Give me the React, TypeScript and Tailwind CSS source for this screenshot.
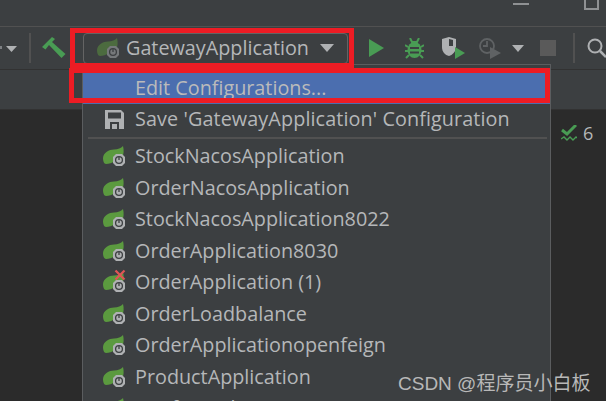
import React from "react";

const font = { fontFamily: '"Open Sans", "Noto Sans", sans-serif' };

function Spring({ dim = false, failed = false }: { dim?: boolean; failed?: boolean }) {
  return (
    <svg width="22" height="20" viewBox="0 0 22 20" className="shrink-0 overflow-visible">
      <path d="M0 12 C0.500 6.500 6 3.500 11 3.500 C15 3.500 18 2 20 0 C21 4 21 8 19 12 L12 15 C9 17 6 18 3 18 C1 18 0 15 0 12 Z" fill={dim ? "#4c6b3f" : "#5b9a3f"} />
      <path d="M10 11 L13 8 H19 L22 11 V17 L19 20 H13 L10 17 Z" fill={dim ? "#76797b" : "#afb1b3"} />
      <circle cx="16" cy="14" r="3.400" fill="none" stroke="#3c3f41" strokeWidth="1.300" />
      <path d="M16 11 V14" stroke="#3c3f41" strokeWidth="1.300" />
      {failed && <path d="M12.500 -1.500 L21.500 7.500 M21.500 -1.500 L12.500 7.500" stroke="#e05555" strokeWidth="2.200" />}
    </svg>
  );
}

function Item({ label, failed }: { label: string; failed?: boolean }) {
  return (
    <div className="flex h-[31.500px] items-center">
      <div className="ml-[20px] w-[32px] shrink-0"><Spring failed={failed} /></div>
      <span className="text-[19.800px] whitespace-nowrap text-[#b5b7b9]">{label}</span>
    </div>
  );
}

export default function App() {
  const items = [
    "StockNacosApplication",
    "OrderNacosApplication",
    "StockNacosApplication8022",
    "OrderApplication8030",
    "OrderApplication (1)",
    "OrderLoadbalance",
    "OrderApplicationopenfeign",
    "ProductApplication",
    "ConfigApplication",
  ];
  return (
    <div className="relative h-[401px] w-[606px] overflow-hidden bg-[#3c3f41]" style={font}>
      {/* title strip */}
      <div className="flex h-[27px] items-start justify-end border-b border-[#515151] pr-[7px]">
        <div className="mr-[55px] mt-[3px] h-[2px] w-[16px] bg-[#8f9193]" />
        <div className="h-[10px] w-[15px] border-2 border-t-0 border-[#8f9193]" />
      </div>

      {/* toolbar */}
      <div className="flex h-[43px] items-center border-b border-[#323232]">
        <svg width="17" height="8" viewBox="0 0 17 8" className="mt-[1px] shrink-0">
          <path d="M0 1 H2 V4 H0 Z" fill="#7d8083" />
          <path d="M6 1 H17 L11.500 7 Z" fill="#afb1b3" />
        </svg>
        <div className="ml-[12px] h-[30px] w-[2px] shrink-0 bg-[#515151]" />
        <svg width="24" height="22" viewBox="0 0 24 22" className="ml-[11px] shrink-0">
          <path d="M0 10 L10 0 L13 2 L10 5 L23.500 17 L19.500 21 L7 8 L3.500 12.500 Z" fill="#499c54" />
        </svg>
        <div className="ml-[17px] flex h-[31px] w-[265px] shrink-0 items-center rounded-[4px] border border-[#646464]">
          <div className="ml-[13px] w-[29px] shrink-0"><Spring dim /></div>
          <span className="text-[19.800px] whitespace-nowrap text-[#b5b7b9]">GatewayApplication</span>
          <svg width="14" height="8" viewBox="0 0 14 8" className="ml-[11px] shrink-0"><path d="M0 0 H14 L7 8 Z" fill="#afb1b3" /></svg>
        </div>
        <svg width="15" height="18" viewBox="0 0 15 18" className="ml-[21px] shrink-0"><path d="M0 0 L15 9 L0 18 Z" fill="#499c54" /></svg>
        <svg width="19" height="21" viewBox="0 0 19 21" className="ml-[21px] shrink-0">
          <path d="M5 0 L7 4 H12 L14 0 M0 7 L3 9 M19 7 L16 9 M0 13 H19 M1 20 L4 17 M18 20 L15 17" stroke="#499c54" strokeWidth="2" fill="none" />
          <ellipse cx="9.500" cy="12" rx="7" ry="8" fill="#499c54" />
          <path d="M5 10 H14 M5 14.500 H14" stroke="#3c3f41" strokeWidth="1.800" />
        </svg>
        <svg width="24" height="22" viewBox="0 0 24 22" className="ml-[18px] shrink-0">
          <path d="M0 2 L7 0 L14 2 V10 C14 15 10 18 7 19 C3 18 0 15 0 10 Z" fill="#afb1b3" />
          <path d="M7 2 L11 3 V9 H7 Z" fill="#3c3f41" />
          <path d="M13 10 L23 16 L13 22 Z" fill="#499c54" />
        </svg>
        <svg width="22" height="22" viewBox="0 0 22 22" className="ml-[13px] shrink-0">
          <circle cx="8" cy="9" r="7" fill="none" stroke="#5f6264" strokeWidth="1.800" />
          <path d="M8 4 V9 H4" fill="none" stroke="#5f6264" strokeWidth="1.800" />
          <path d="M11 10 L22 16 L11 22 Z" fill="#5f6264" />
        </svg>
        <svg width="12" height="7" viewBox="0 0 12 7" className="ml-[11px] shrink-0"><path d="M0 0 H12 L6 7 Z" fill="#afb1b3" /></svg>
        <div className="ml-[16px] h-[16px] w-[16px] shrink-0 bg-[#5a5a5a]" />
        <div className="ml-[17px] h-[30px] w-[2px] shrink-0 bg-[#515151]" />
        <svg width="22" height="22" viewBox="0 0 22 22" className="ml-[11px] shrink-0">
          <circle cx="9" cy="9" r="6.500" fill="none" stroke="#afb1b3" strokeWidth="2" />
          <path d="M14 14 L20 20" stroke="#afb1b3" strokeWidth="2.500" />
        </svg>
      </div>

      {/* tab strip */}
      <div className="h-[40px] border-b border-[#323232]" />

      {/* editor */}
      <div className="flex h-[291px] justify-end bg-[#2b2b2b] pl-[561px] pt-[14px]">
        <div className="flex h-[18px] w-[45px] items-center gap-[6px]">
          <svg width="16" height="16" viewBox="0 0 16 16" className="shrink-0">
            <path d="M1 5 L6 9 L15 0" stroke="#499c54" strokeWidth="3" fill="none" />
            <path d="M0 14 L3 12 L6 15 L9 12 L12 15 L15 12 L16 13" stroke="#499c54" strokeWidth="1.400" fill="none" />
          </svg>
          <span className="text-[18px] text-[#b5b7b9]">6</span>
        </div>
      </div>

      {/* dropdown menu */}
      <div className="absolute left-[82px] top-[64px] h-[340px] w-[469px] border-x border-t border-[#5b5d5f] bg-[#3c3f41] pt-[7px]">
        <div className="flex h-[31.500px] items-center bg-[#4b6eaf] pl-[52px] text-[19.800px] whitespace-nowrap text-[#bbbbbb]">Edit Configurations...</div>
        <div className="flex h-[31.500px] items-center">
          <svg width="19" height="19" viewBox="0 0 19 19" className="ml-[22px] mr-[11px] shrink-0">
            <path d="M0 0 H16 L19 3 V19 H0 Z" fill="#afb1b3" />
            <rect x="3" y="2.500" width="13" height="6" fill="#3c3f41" />
            <rect x="5" y="12" width="9" height="7" fill="#3c3f41" />
            <rect x="7" y="14" width="5" height="5" fill="#afb1b3" />
          </svg>
          <span className="text-[19.800px] tracking-[0.1px] whitespace-nowrap text-[#b5b7b9]">Save 'GatewayApplication' Configuration</span>
        </div>
        <div className="ml-[5px] mr-[3px] mt-[2px] mb-[1.500px] h-[2px] bg-[#515151]" />
        <div>
          {items.map((label) => (
            <Item key={label} label={label} failed={label === "OrderApplication (1)"} />
          ))}
        </div>
      </div>

      {/* annotation rectangles */}
      <div className="absolute left-[70px] top-[28px] h-[40px] w-[284px] border-[5px] border-[#ed1c24]" />
      <div className="absolute left-[69px] top-[68px] h-[35px] w-[481px] border-[5px] border-[#ed1c24]" />

      {/* watermark */}
      <div className="absolute left-[398px] top-[370px] text-[19px] whitespace-nowrap text-[#b8b8b8]" style={{ fontFamily: '"Liberation Sans", "Noto Sans CJK SC", sans-serif' }}>CSDN @程序员小白板</div>
    </div>
  );
}
